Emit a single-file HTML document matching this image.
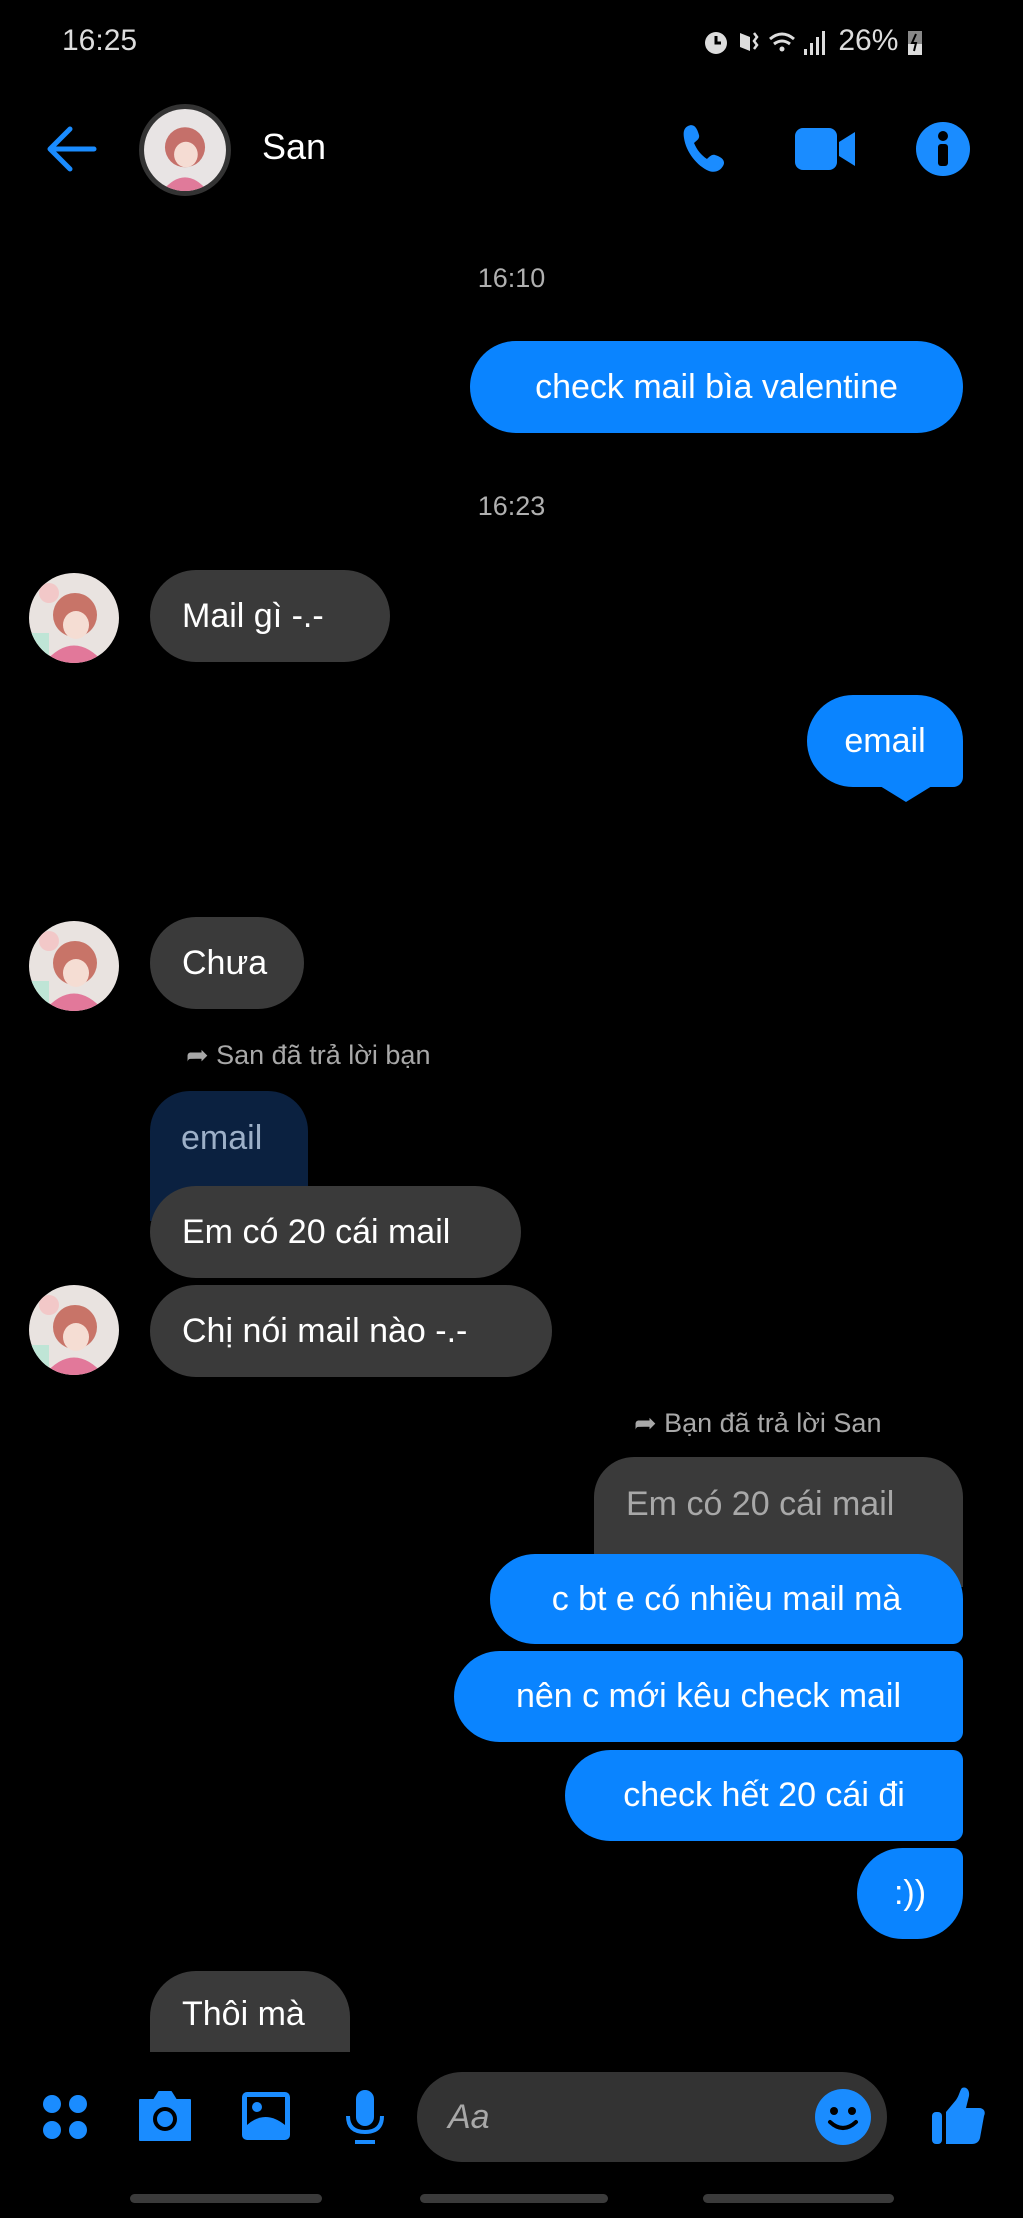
<!DOCTYPE html>
<html><head><meta charset="utf-8"><style>
*{margin:0;padding:0;box-sizing:border-box}
body{width:1023px;height:2218px;background:#000;position:relative;overflow:hidden;font-family:"Liberation Sans","DejaVu Sans",sans-serif;color:#fff}
.a{position:absolute}
.b{position:absolute;display:flex;align-items:center;font-size:34px;white-space:nowrap;border-radius:46px}
.me{background:#0a84ff;justify-content:center}
.th{background:#3a3a3a;padding-left:32px}
.ts{position:absolute;font-size:27px;color:#b0b0b0;width:1023px;text-align:center}
.av{position:absolute;width:90px;height:90px;border-radius:50%;overflow:hidden}
.note{position:absolute;font-size:27px;color:#a8a8a8;white-space:nowrap}
</style></head><body>

<div class="a" style="left:62px;top:24px;font-size:30px;color:#ddd">16:25</div>
<div class="a" style="left:700px;top:24px;font-size:30px;color:#ddd;white-space:nowrap">
<svg width="130" height="34" viewBox="0 0 130 34" style="vertical-align:middle"><circle cx="16" cy="18" r="11" fill="#ddd"/><path d="M16 11v7h5" stroke="#000" stroke-width="3" fill="none"/><path d="M40 8l10 4v14l-10-4z" fill="#ddd"/><path d="M54 8l3 4-3 4 3 4-3 4" stroke="#ddd" stroke-width="2.5" fill="none"/><path d="M70 14q12-10 24 0M74 19q8-6 16 0" stroke="#ddd" stroke-width="3" fill="none"/><circle cx="82" cy="24" r="2.5" fill="#ddd"/><rect x="104" y="24" width="3" height="6" fill="#ddd"/><rect x="110" y="18" width="3" height="12" fill="#ddd"/><rect x="116" y="12" width="3" height="18" fill="#ddd"/><rect x="122" y="6" width="3" height="24" fill="#ddd"/></svg> 26% <svg width="16" height="28" viewBox="0 0 16 28" style="vertical-align:middle"><rect x="1" y="3" width="14" height="24" fill="#888"/><rect x="1" y="16" width="14" height="11" fill="#ddd"/><path d="M9 6l-4 9h4l-2 8" stroke="#000" stroke-width="2" fill="none"/></svg></div>

<!-- header -->
<svg class="a" style="left:42px;top:124px" width="56" height="50" viewBox="0 0 56 50"><path d="M52 25H8M28 5L8 25l20 20" stroke="#1a8cff" stroke-width="5" fill="none" stroke-linecap="round" stroke-linejoin="round"/></svg>
<div class="a" style="left:139px;top:104px;width:92px;height:92px;border-radius:50%;border:5px solid #333;overflow:hidden">
<svg width="82" height="82" viewBox="0 0 90 90"><rect width="90" height="90" fill="#e8e4e4"/><circle cx="45" cy="42" r="22" fill="#c5706a"/><ellipse cx="46" cy="50" rx="13" ry="14" fill="#f5dcd3"/><path d="M20 90q25-30 50 0z" fill="#e07a9a"/></svg></div>
<div class="a" style="left:262px;top:126px;font-size:36px">San</div>
<svg class="a" style="left:680px;top:122px" width="50" height="54" viewBox="0 0 50 54"><path d="M8 4c6-3 9 2 11 9 1 4-3 6-5 8 3 7 7 12 13 16 2-2 5-5 8-4 7 2 11 6 8 11-3 5-8 7-14 5C17 44 6 30 4 16 3 10 4 6 8 4z" fill="#1a8cff"/></svg>
<svg class="a" style="left:795px;top:128px" width="62" height="42" viewBox="0 0 62 42"><rect x="0" y="0" width="42" height="42" rx="8" fill="#1a8cff"/><path d="M44 14l16-10v34l-16-10z" fill="#1a8cff"/></svg>
<svg class="a" style="left:916px;top:122px" width="54" height="54" viewBox="0 0 54 54"><circle cx="27" cy="27" r="27" fill="#1a8cff"/><circle cx="27" cy="14" r="5" fill="#000"/><rect x="22" y="22" width="10" height="22" rx="3" fill="#000"/></svg>

<div class="ts" style="top:263px;left:0">16:10</div>
<div class="b me" style="left:470px;top:341px;width:493px;height:92px">check mail bìa valentine</div>

<div class="ts" style="top:491px;left:0">16:23</div>
<svg class="av" style="left:29px;top:573px" viewBox="0 0 90 90"><rect width="90" height="90" fill="#e9e3e0"/><circle cx="20" cy="20" r="10" fill="#f2c8c8"/><circle cx="46" cy="42" r="22" fill="#c87468"/><ellipse cx="47" cy="52" rx="13" ry="14" fill="#f5ddd3"/><path d="M15 90q30-35 60 0z" fill="#e2789a"/><rect x="0" y="60" width="20" height="30" fill="#bfe5d6"/></svg>
<div class="b th" style="left:150px;top:570px;width:240px;height:92px">Mail gì -.-</div>

<div class="b me" style="left:807px;top:695px;width:156px;height:92px;border-radius:46px 46px 10px 46px">email</div>
<svg class="a" style="left:880px;top:786px" width="52" height="16" viewBox="0 0 52 16"><path d="M0 0h52L26 16z" fill="#0a84ff"/></svg>

<svg class="av" style="left:29px;top:921px" viewBox="0 0 90 90"><rect width="90" height="90" fill="#e9e3e0"/><circle cx="20" cy="20" r="10" fill="#f2c8c8"/><circle cx="46" cy="42" r="22" fill="#c87468"/><ellipse cx="47" cy="52" rx="13" ry="14" fill="#f5ddd3"/><path d="M15 90q30-35 60 0z" fill="#e2789a"/><rect x="0" y="60" width="20" height="30" fill="#bfe5d6"/></svg>
<div class="b th" style="left:150px;top:917px;width:154px;height:92px">Chưa</div>

<div class="note" style="left:186px;top:1040px">➦ San đã trả lời bạn</div>
<div class="a" style="left:150px;top:1091px;width:158px;height:130px;background:#0b2140;border-radius:40px 40px 0 0;font-size:34px;color:#9db0c8;padding:28px 0 0 31px">email</div>
<div class="b th" style="left:150px;top:1186px;width:371px;height:92px">Em có 20 cái mail</div>
<svg class="av" style="left:29px;top:1285px" viewBox="0 0 90 90"><rect width="90" height="90" fill="#e9e3e0"/><circle cx="20" cy="20" r="10" fill="#f2c8c8"/><circle cx="46" cy="42" r="22" fill="#c87468"/><ellipse cx="47" cy="52" rx="13" ry="14" fill="#f5ddd3"/><path d="M15 90q30-35 60 0z" fill="#e2789a"/><rect x="0" y="60" width="20" height="30" fill="#bfe5d6"/></svg>
<div class="b th" style="left:150px;top:1285px;width:402px;height:92px">Chị nói mail nào -.-</div>

<div class="note" style="left:634px;top:1408px">➦ Bạn đã trả lời San</div>
<div class="a" style="left:594px;top:1457px;width:369px;height:130px;background:#3a3a3a;border-radius:40px 40px 0 0;font-size:34px;color:#a8a8a8;padding:28px 0 0 32px">Em có 20 cái mail</div>
<div class="b me" style="left:490px;top:1554px;width:473px;height:90px;border-radius:46px 46px 10px 46px">c bt e có nhiều mail mà</div>
<div class="b me" style="left:454px;top:1651px;width:509px;height:91px;border-radius:46px 10px 10px 46px">nên c mới kêu check mail</div>
<div class="b me" style="left:565px;top:1750px;width:398px;height:91px;border-radius:46px 10px 10px 46px">check hết 20 cái đi</div>
<div class="b me" style="left:857px;top:1848px;width:106px;height:91px;border-radius:46px 10px 46px 46px">:))</div>

<div class="b th" style="left:150px;top:1971px;width:200px;height:110px;border-radius:46px 46px 0 0;align-items:flex-start;padding-top:24px">Thôi mà</div>

<!-- bottom bar -->
<div class="a" style="left:0;top:2052px;width:1023px;height:166px;background:#000"></div>
<svg class="a" style="left:40px;top:2092px" width="50" height="50" viewBox="0 0 50 50"><circle cx="12" cy="12" r="9" fill="#1a8cff"/><circle cx="38" cy="12" r="9" fill="#1a8cff"/><circle cx="12" cy="38" r="9" fill="#1a8cff"/><circle cx="38" cy="38" r="9" fill="#1a8cff"/></svg>
<svg class="a" style="left:136px;top:2090px" width="58" height="52" viewBox="0 0 58 52"><path d="M4 10h14l5-8h12l5 8h14v40H4z" fill="#1a8cff" stroke="#1a8cff" stroke-width="2" stroke-linejoin="round"/><circle cx="29" cy="29" r="10" fill="none" stroke="#000" stroke-width="4"/></svg>
<svg class="a" style="left:240px;top:2090px" width="52" height="52" viewBox="0 0 52 52"><rect x="2" y="2" width="48" height="48" rx="5" fill="#1a8cff"/><rect x="7" y="7" width="38" height="38" fill="#000"/><circle cx="17" cy="17" r="5" fill="#1a8cff"/><path d="M7 45V35q18-16 38 0v10z" fill="#1a8cff"/></svg>
<svg class="a" style="left:345px;top:2088px" width="40" height="58" viewBox="0 0 40 58"><rect x="11" y="2" width="18" height="36" rx="9" fill="#1a8cff"/><path d="M3 28q0 16 17 16t17-16" stroke="#1a8cff" stroke-width="4" fill="none"/><path d="M10 54h20" stroke="#1a8cff" stroke-width="4"/></svg>
<div class="a" style="left:417px;top:2072px;width:470px;height:90px;border-radius:45px;background:#333"></div>
<div class="a" style="left:448px;top:2098px;font-size:34px;color:#a8a8a8;font-style:italic">Aa</div>
<svg class="a" style="left:815px;top:2089px" width="56" height="56" viewBox="0 0 56 56"><circle cx="28" cy="28" r="28" fill="#1a8cff"/><circle cx="19" cy="22" r="4" fill="#000"/><circle cx="37" cy="22" r="4" fill="#000"/><path d="M15 33q13 12 26 0" stroke="#000" stroke-width="4" fill="none" stroke-linecap="round"/></svg>
<svg class="a" style="left:930px;top:2086px" width="56" height="60" viewBox="0 0 56 60"><rect x="2" y="26" width="10" height="32" rx="4" fill="#1a8cff"/><path d="M16 26l10-12c3-4 4-10 6-12 4-2 8 2 7 8l-3 12h13c5 0 7 4 5 8l-4 22c-1 4-4 6-8 6H16z" fill="#1a8cff"/></svg>

<div class="a" style="left:130px;top:2194px;width:192px;height:9px;border-radius:5px;background:#3b3b3b"></div>
<div class="a" style="left:420px;top:2194px;width:188px;height:9px;border-radius:5px;background:#3b3b3b"></div>
<div class="a" style="left:703px;top:2194px;width:191px;height:9px;border-radius:5px;background:#3b3b3b"></div>
</body></html>
